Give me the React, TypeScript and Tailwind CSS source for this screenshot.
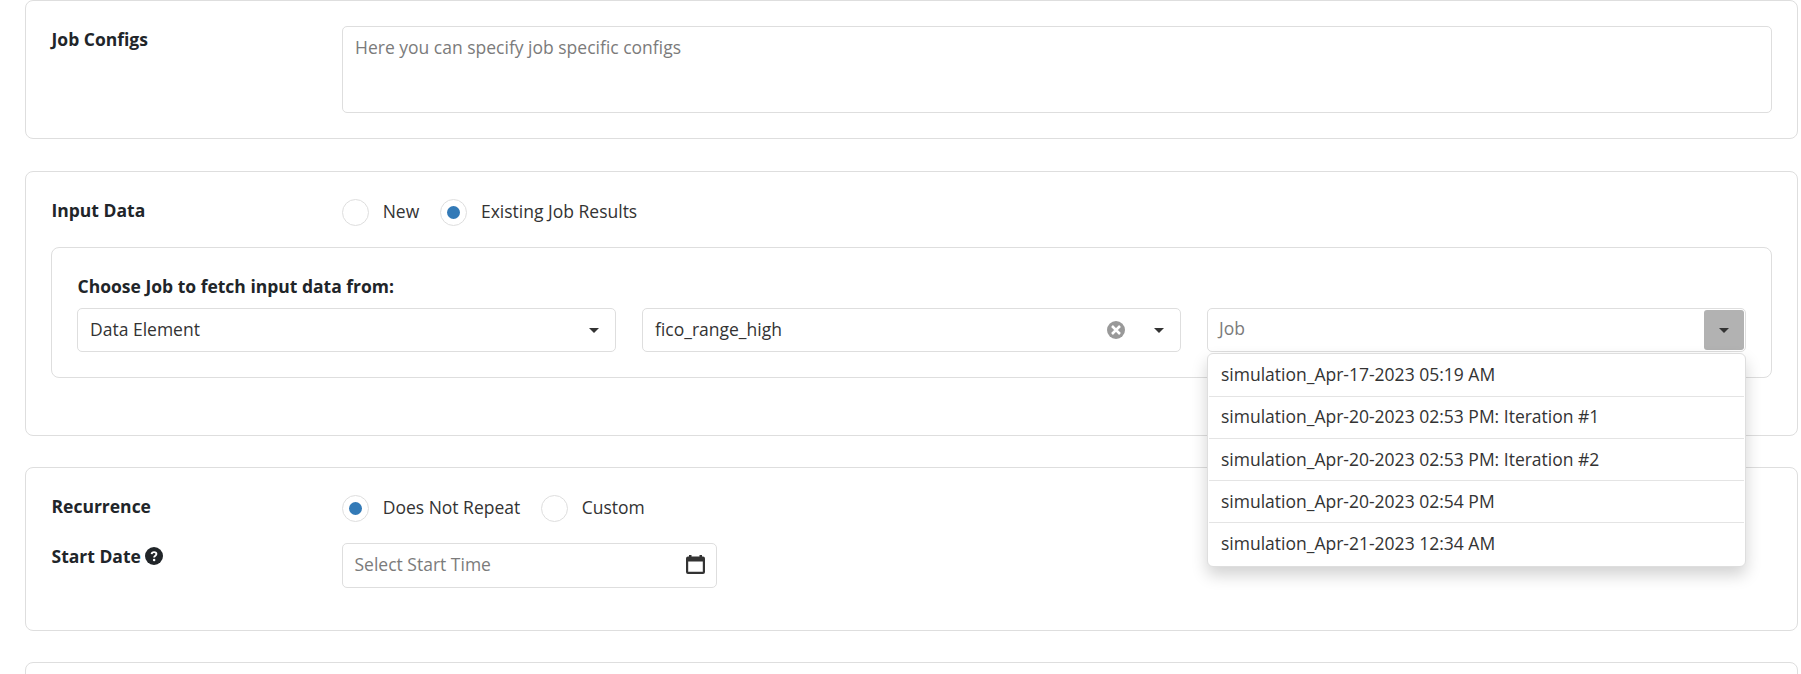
import type { ReactNode } from "react";

const jobs = [
  "simulation_Apr-17-2023 05:19 AM",
  "simulation_Apr-20-2023 02:53 PM: Iteration #1",
  "simulation_Apr-20-2023 02:53 PM: Iteration #2",
  "simulation_Apr-20-2023 02:54 PM",
  "simulation_Apr-21-2023 12:34 AM",
];

function Card({ className, children }: { className: string; children?: ReactNode }) {
  return (
    <section className={`shrink-0 rounded-lg border border-[#dedede] ${className}`}>{children}</section>
  );
}

function Label({ children }: { children: ReactNode }) {
  return <div className="w-[291px] shrink-0 pl-[0.5px] font-bold text-[#212529]">{children}</div>;
}

function Radio({ label, checked = false }: { label: string; checked?: boolean }) {
  return (
    <label className="flex h-[27px] items-center">
      <span className="flex size-[27px] items-center justify-center rounded-full border border-[#dedede]">
        {checked && <span className="size-[13px] rounded-full bg-[#337ab7]" />}
      </span>
      <span className="ml-[13.7px] pb-[3px]">{label}</span>
    </label>
  );
}

function Caret() {
  return (
    <svg className="h-[5px] w-[10px]" viewBox="0 0 10 5" fill="#333333">
      <path d="M0 0h10L5 5z" />
    </svg>
  );
}

function Select({ children }: { children: ReactNode }) {
  return (
    <div className="relative flex h-[44px] flex-1 items-center rounded-[5px] border border-[#dedede] pl-3">
      {children}
    </div>
  );
}

export default function App() {
  return (
    <main className="flex h-[674px] w-[1801px] flex-col gap-[31px] overflow-hidden bg-white pr-[3px] pl-[25px] font-['Open_Sans',sans-serif] text-[17.5px] leading-[26px] text-[#333333]">
      <Card className="mb-px flex h-[139px] items-start pt-[25px] pr-[25px] pl-[25px]">
        <Label>Job Configs</Label>
        <div className="h-[87px] flex-1 rounded-[5px] border border-[#dedede] px-3 pt-[7px] text-[#7b7b7b]">
          Here you can specify job specific configs
        </div>
      </Card>

      <Card className="h-[265px] px-[25px] pt-[25px]">
        <div className="flex h-[27px]">
          <Label>Input Data</Label>
          <div className="flex gap-[21px] pt-[2px]">
            <Radio label="New" />
            <Radio label="Existing Job Results" checked />
          </div>
        </div>
        <div className="mt-[23px] h-[131px] rounded-lg border border-[#dedede] px-[25px] pt-[25px]">
          <div className="h-[35px] pl-[0.5px] font-bold text-[#212529]">Choose Job to fetch input data from:</div>
          <div className="flex gap-[26px]">
            <Select>
              <span className="flex-1 pb-[2px]">Data Element</span>
              <span className="mr-4 flex"><Caret /></span>
            </Select>
            <Select>
              <span className="flex-1 pb-[2px]">fico_range_high</span>
              <svg className="mr-[29px] size-[18px]" viewBox="0 0 18 18">
                <circle cx="9" cy="9" r="9" fill="#999999" />
                <path d="M5 5l8 8M13 5l-8 8" stroke="#fff" strokeWidth="2.5" />
              </svg>
              <span className="mr-4 flex"><Caret /></span>
            </Select>
            <Select>
              <span className="-ml-px flex-1 pb-1 text-[#7b7b7b]">Job</span>
              <span className="mr-px flex h-10 w-10 items-center justify-center rounded-[3px] bg-[#b2b2b2]">
                <Caret />
              </span>
              <ul className="absolute top-[44px] -left-px z-10 h-[214px] w-[539px] rounded-[6px] border border-[#dedede] bg-white px-px shadow-[0_8px_16px_rgba(0,0,0,0.18)]">
                {jobs.map((job) => (
                  <li key={job} className="h-[42.15px] border-b border-[#e4e4e4] pt-[6.45px] pl-3 first:h-[43px] first:pt-[7px] last:border-b-0">
                    {job}
                  </li>
                ))}
              </ul>
            </Select>
          </div>
        </div>
      </Card>

      <Card className="h-[164px] px-[25px] pt-[25px]">
        <div className="flex h-[50px]">
          <Label>Recurrence</Label>
          <div className="flex gap-[20.7px] pt-[2px]">
            <Radio label="Does Not Repeat" checked />
            <Radio label="Custom" />
          </div>
        </div>
        <div className="flex">
          <Label>
            <span className="flex items-center gap-[4.5px]">
              Start Date
              <svg className="size-[18px]" viewBox="0 0 18 18">
                <circle cx="9" cy="9" r="9" fill="#212529" />
                <path d="M6.600 7.100C6.800 5.700 7.700 5.100 9 5.100c1.400 0 2.400.8 2.400 1.900C11.400 8.700 9.100 8.600 9.100 10.600" fill="none" stroke="#fff" strokeWidth="1.9" />
                <circle cx="9.1" cy="12.9" r="1.25" fill="#fff" />
              </svg>
            </span>
          </Label>
          <div className="flex h-[45px] w-[375px] items-center rounded-[5px] border border-[#dedede] pr-[11px] pl-[11.5px]">
            <span className="flex-1 pb-[3px] text-[#7b7b7b]">Select Start Time</span>
            <svg className="mb-[3px] h-[19px] w-[19px]" viewBox="0 0 19 19" fill="#333333" fillRule="evenodd">
              <path d="M3 0h2.5v1.5h8V0H16v1.5h1a2 2 0 0 1 2 2V17a2 2 0 0 1-2 2H2a2 2 0 0 1-2-2V3.5a2 2 0 0 1 2-2h1zM2.2 6.5v10.3h14.6V6.5z" />
            </svg>
          </div>
        </div>
      </Card>

      <Card className="h-[100px]" />
    </main>
  );
}
